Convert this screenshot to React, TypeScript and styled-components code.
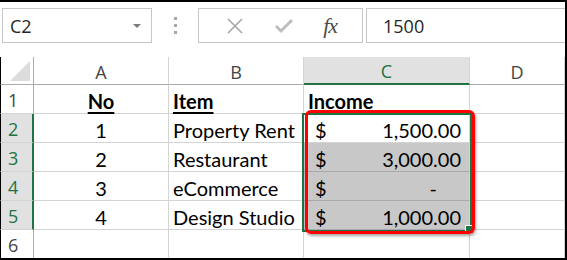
import React from 'react';
import styled, { createGlobalStyle } from 'styled-components';

const GlobalStyle = createGlobalStyle`
  html, body { margin: 0; padding: 0; background: #fff; }
  * { box-sizing: border-box; }
`;

const Frame = styled.div`
  width: 567px;
  height: 260px;
  border-top: 2px solid #000;
  border-right: 2px solid #000;
  border-bottom: 2px solid #000;
  background: #fff;
  overflow: hidden;
  font-family: 'Open Sans', 'Noto Sans', sans-serif;
`;

const FormulaBar = styled.div`
  display: flex;
  align-items: center;
  height: 55px;
  padding: 5px 0 13px 2px;
`;

const Box = styled.div`
  height: 35px;
  border: 1px solid #c6c6c6;
  display: flex;
  align-items: center;
  font-size: 18px;
  color: #262626;
`;

const NameBox = styled(Box)`
  width: 150px;
  padding: 0 10px 0 7px;
  justify-content: space-between;
`;

const Caret = styled.span`
  width: 0;
  height: 0;
  border-left: 4px solid transparent;
  border-right: 4px solid transparent;
  border-top: 4px solid #7a7a7a;
`;

const Dots = styled.div`
  width: 46px;
  display: flex;
  flex-direction: column;
  align-items: center;
  gap: 4px;
  & > span { width: 3px; height: 3px; background: #a8a8a8; }
`;

const ButtonsBox = styled(Box)`
  width: 165px;
  justify-content: space-around;
  padding: 0 10px 0 12px;
`;

const Fx = styled.span`
  font-family: 'Liberation Serif', 'DejaVu Serif', serif;
  font-style: italic;
  font-size: 22px;
  color: #4a4a4a;
  letter-spacing: -1px;
`;

const InputBox = styled(Box)`
  flex: 1;
  margin-left: 3px;
  border-right: none;
  padding-left: 16px;
`;

const Sheet = styled.div`
  position: relative;
  display: grid;
  grid-template-columns: 34px 135px 135px 166px 95px;
  grid-template-rows: 28px repeat(6, 29px);
  font-family: 'Lato', 'Open Sans', sans-serif;
`;

const Corner = styled.div`
  border-right: 1px solid #ababab;
  border-bottom: 1px solid #ababab;
  border-left: 1px solid #000;
  position: relative;
  &::after {
    content: '';
    position: absolute;
    right: 3px;
    bottom: 3px;
    width: 0;
    height: 0;
    border-left: 20px solid transparent;
    border-bottom: 20px solid #dcdcdc;
  }
`;

const ColHeader = styled.div<{ $active?: boolean }>`
  display: flex;
  align-items: center;
  justify-content: center;
  padding-top: 2px;
  font-family: 'Open Sans', 'Noto Sans', sans-serif;
  font-size: 18px;
  color: ${(p) => (p.$active ? '#217346' : '#444')};
  background: ${(p) => (p.$active ? '#e1e1e1' : '#fff')};
  border-right: 1px solid #d4d4d4;
  border-bottom: ${(p) => (p.$active ? '2px solid #217346' : '1px solid #ababab')};
`;

const RowHeader = styled.div<{ $active?: boolean }>`
  display: flex;
  align-items: center;
  padding: 2px 0 0 7px;
  font-family: 'Open Sans', 'Noto Sans', sans-serif;
  font-size: 18px;
  color: ${(p) => (p.$active ? '#217346' : '#444')};
  background: ${(p) => (p.$active ? '#e1e1e1' : '#fff')};
  border-left: 1px solid #000;
  border-right: ${(p) => (p.$active ? '2px solid #217346' : '1px solid #ababab')};
  border-bottom: 1px solid #d4d4d4;
`;

const Cell = styled.div<{ $align?: 'left' | 'center'; $bold?: boolean; $fill?: boolean }>`
  display: flex;
  align-items: center;
  justify-content: ${(p) => (p.$align === 'center' ? 'center' : 'flex-start')};
  padding: 3px 4px 0;
  font-size: 20px;
  font-weight: ${(p) => (p.$bold ? 700 : 400)};
  text-decoration: ${(p) => (p.$bold ? 'underline' : 'none')};
  text-underline-offset: 3px;
  text-decoration-thickness: 2px;
  color: #000;
  white-space: nowrap;
  background: ${(p) => (p.$fill ? '#c8c8c8' : '#fff')};
  border-right: 1px solid #d4d4d4;
  border-bottom: 1px solid ${(p) => (p.$fill ? '#a9a9a9' : '#d4d4d4')};
`;

const MoneyCell = styled(Cell)`
  justify-content: space-between;
  padding: 3px 8px 0 11px;
`;

const Dash = styled.span`
  padding-right: 24px;
`;

const Selection = styled.div`
  position: absolute;
  left: 302px;
  top: 56px;
  width: 170px;
  height: 119px;
  border: 2px solid #217346;
  pointer-events: none;
  &::after {
    content: '';
    position: absolute;
    right: -4px;
    bottom: -4px;
    width: 7px;
    height: 7px;
    background: #217346;
    border: 1px solid #fff;
  }
`;

const Highlight = styled.div`
  position: absolute;
  left: 305px;
  top: 53px;
  width: 170px;
  height: 124px;
  border: 3px solid #ff0000;
  border-radius: 6px;
  box-shadow: 1px 2px 3px rgba(0, 0, 0, 0.35);
  pointer-events: none;
`;

const rows = [
  { no: '1', item: 'Property Rent', amount: '1,500.00' },
  { no: '2', item: 'Restaurant', amount: '3,000.00' },
  { no: '3', item: 'eCommerce', amount: '-' },
  { no: '4', item: 'Design Studio', amount: '1,000.00' },
];

export default function App() {
  return (
    <>
      <GlobalStyle />
      <Frame>
        <FormulaBar>
          <NameBox>
            <span>C2</span>
            <Caret />
          </NameBox>
          <Dots>
            <span />
            <span />
            <span />
          </Dots>
          <ButtonsBox>
            <svg width="18" height="18" viewBox="0 0 18 18">
              <path d="M2 2 L16 16 M16 2 L2 16" stroke="#a6a6a6" strokeWidth="1.6" fill="none" />
            </svg>
            <svg width="20" height="18" viewBox="0 0 20 18">
              <path d="M2 9 L7 14 L18 3" stroke="#bdbdbd" strokeWidth="3" fill="none" />
            </svg>
            <Fx>fx</Fx>
          </ButtonsBox>
          <InputBox>1500</InputBox>
        </FormulaBar>
        <Sheet>
          <Corner />
          <ColHeader>A</ColHeader>
          <ColHeader>B</ColHeader>
          <ColHeader $active>C</ColHeader>
          <ColHeader>D</ColHeader>

          <RowHeader>1</RowHeader>
          <Cell $align="center" $bold>No</Cell>
          <Cell $bold>Item</Cell>
          <Cell $bold>Income</Cell>
          <Cell />

          {rows.map((r, i) => (
            <React.Fragment key={r.no}>
              <RowHeader $active>{i + 2}</RowHeader>
              <Cell $align="center">{r.no}</Cell>
              <Cell>{r.item}</Cell>
              <MoneyCell $fill={i > 0}>
                <span>$</span>
                {r.amount === '-' ? <Dash>-</Dash> : <span>{r.amount}</span>}
              </MoneyCell>
              <Cell />
            </React.Fragment>
          ))}

          <RowHeader>6</RowHeader>
          <Cell />
          <Cell />
          <Cell />
          <Cell />

          <Selection />
          <Highlight />
        </Sheet>
      </Frame>
    </>
  );
}
